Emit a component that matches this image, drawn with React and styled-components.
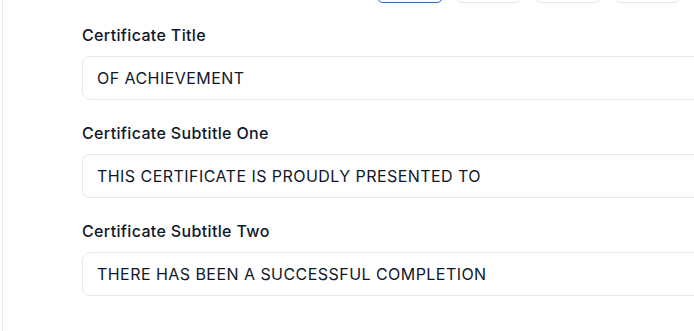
import React from "react";
import styled, { createGlobalStyle } from "styled-components";

const Global = createGlobalStyle`
  html, body { margin: 0; padding: 0; background: #ffffff; }
  body { font-family: Inter, "Noto Sans", Arial, sans-serif; }
  * { box-sizing: border-box; }
`;

const Viewport = styled.div`
  width: 694px;
  height: 331px;
  overflow: hidden;
  background: #ffffff;
`;

const Panel = styled.div`
  display: flow-root;
  margin-left: 2px;
  border-left: 1px solid #e5e7eb;
  height: 100%;
  width: 760px;
`;

const Toolbar = styled.div`
  display: flex;
  gap: 13px;
  margin-top: -33px;
  padding-left: 374px;
  height: 36px;
`;

const TabButton = styled.button`
  width: 66px;
  height: 36px;
  border-radius: 6px;
  background: #ffffff;
  border: 1px solid ${(p) => (p.$active ? "#2563eb" : "#e5e7eb")};
  padding: 0;
`;

const Form = styled.div`
  display: flex;
  flex-direction: column;
  gap: 23px;
  padding-left: 79px;
  padding-top: 22px;
`;

const Field = styled.div`
  display: flex;
  flex-direction: column;
  gap: 11px;
`;

const Label = styled.label`
  font-family: Inter, "Noto Sans", Arial, sans-serif;
  font-size: 16px;
  line-height: 20px;
  font-weight: 500;
  letter-spacing: 0.35px;
  color: #0f172a;
`;

const Input = styled.input`
  height: 44px;
  width: 100%;
  border: 1px solid #e5e7eb;
  border-radius: 8px;
  padding: 0 14px;
  font-family: Inter, "Noto Sans", Arial, sans-serif;
  font-size: 16px;
  letter-spacing: 0.45px;
  color: #0f172a;
  background: #ffffff;
  outline: none;
`;

const fields = [
  { label: "Certificate Title", value: "OF ACHIEVEMENT" },
  { label: "Certificate Subtitle One", value: "THIS CERTIFICATE IS PROUDLY PRESENTED TO" },
  { label: "Certificate Subtitle Two", value: "THERE HAS BEEN A SUCCESSFUL COMPLETION" },
];

export default function App() {
  return (
    <>
      <Global />
      <Viewport>
        <Panel>
          <Toolbar>
            <TabButton $active />
            <TabButton />
            <TabButton />
            <TabButton />
          </Toolbar>
          <Form>
            {fields.map((f) => (
              <Field key={f.label}>
                <Label>{f.label}</Label>
                <Input defaultValue={f.value} readOnly />
              </Field>
            ))}
          </Form>
        </Panel>
      </Viewport>
    </>
  );
}
